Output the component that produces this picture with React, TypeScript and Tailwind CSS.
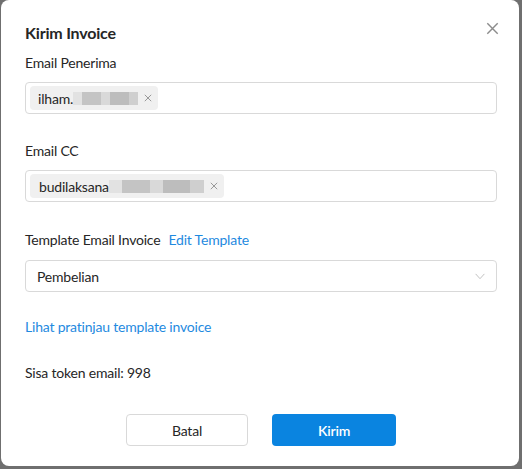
import React from "react";

const font = { fontFamily: "Lato, 'Noto Sans', sans-serif" };

function XIcon({ className }: { className?: string }) {
  return (
    <svg viewBox="0 0 10 10" className={className} fill="none" stroke="currentColor" strokeWidth="1.1">
      <path d="M1 1 L9 9 M9 1 L1 9" />
    </svg>
  );
}

function Blur({ w }: { w: number }) {
  return (
    <span className="inline-flex h-[13px] items-center" style={{ width: w }}>
      <span className="h-full flex-1 bg-[#e2e2e2]" />
      <span className="h-full flex-[2] bg-[#c4c4c4]" />
      <span className="h-full flex-1 bg-[#d9d9d9]" />
      <span className="h-full flex-[2] bg-[#bdbdbd]" />
      <span className="h-full flex-1 bg-[#cfcfcf]" />
    </span>
  );
}

export default function App() {
  return (
    <div className="h-[469px] w-[522px] overflow-hidden bg-[#6f6f6f] text-[#262626] tracking-[-0.2px]" style={font}>
      <div className="relative ml-[1px] h-[466px] w-[518px] rounded-lg bg-white pl-[24px] pr-[22px] pt-[21px]">
        <XIcon className="absolute right-[20px] top-[22px] h-[13px] w-[13px] text-[#8c8c8c]" />
        <div className="text-[16px] font-bold leading-6">Kirim Invoice</div>

        <div className="mt-2 text-[14px] leading-5">Email Penerima</div>
        <div className="mt-[9px] flex h-[32px] items-center rounded-[4px] border border-[#d9d9d9] px-[4px]">
          <span className="flex h-[24px] items-center rounded-[4px] bg-[#f0f0f0] pl-[8px] pr-[6px] text-[14px]">
            ilham.
            <Blur w={65} />
            <XIcon className="ml-[6px] h-[8px] w-[8px] text-[#8c8c8c]" />
          </span>
        </div>

        <div className="mt-[27px] text-[14px] leading-5">Email CC</div>
        <div className="mt-[9px] flex h-[32px] items-center rounded-[4px] border border-[#d9d9d9] px-[4px]">
          <span className="flex h-[24px] items-center rounded-[4px] bg-[#f0f0f0] pl-[9px] pr-[6px] text-[14px]">
            budilaksana
            <Blur w={95} />
            <XIcon className="ml-[6px] h-[8px] w-[8px] text-[#8c8c8c]" />
          </span>
        </div>

        <div className="mt-[28px] flex text-[14px] leading-5">
          <span>Template Email Invoice</span>
          <span className="ml-[8px] text-[#1f8ae0]">Edit Template</span>
        </div>
        <div className="mt-[10px] flex h-[32px] items-center justify-between rounded-[4px] border border-[#d9d9d9] pl-[11px] pr-[10px] text-[14px]">
          <span>Pembelian</span>
          <svg viewBox="0 0 12 8" className="h-[7px] w-[12px] text-[#bfbfbf]" fill="none" stroke="currentColor" strokeWidth="1.1">
            <path d="M1 1 L6 6.5 L11 1" />
          </svg>
        </div>

        <div className="mt-[25px] text-[14px] leading-5 text-[#1f8ae0]">Lihat pratinjau template invoice</div>
        <div className="mt-[26px] text-[14px] leading-5">Sisa token email: 998</div>

        <div className="mt-[31px] flex justify-center gap-6">
          <button className="h-[32px] w-[122px] rounded-[4px] border border-[#d9d9d9] bg-white text-[14px]">Batal</button>
          <button className="h-[32px] w-[124px] rounded-[4px] bg-[#0a84e0] text-[14px] font-semibold text-white">Kirim</button>
        </div>
      </div>
    </div>
  );
}
